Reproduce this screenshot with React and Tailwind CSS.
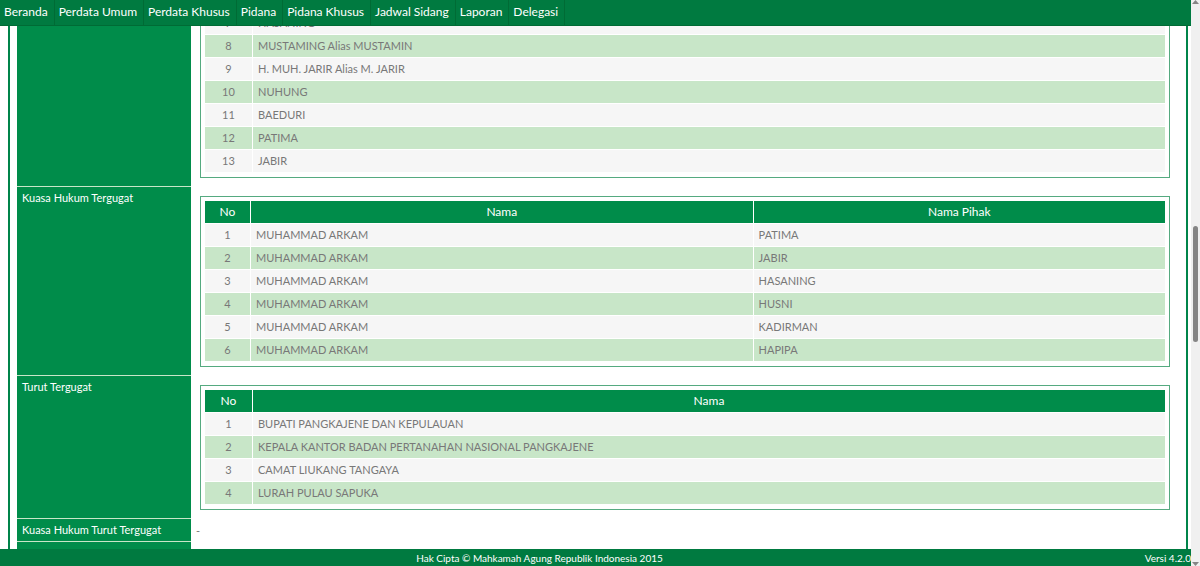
const menu = [
  'Beranda',
  'Perdata Umum',
  'Perdata Khusus',
  'Pidana',
  'Pidana Khusus',
  'Jadwal Sidang',
  'Laporan',
  'Delegasi',
]

const tergugat = [
  [7, 'HASANING'],
  [8, 'MUSTAMING Alias MUSTAMIN'],
  [9, 'H. MUH. JARIR Alias M. JARIR'],
  [10, 'NUHUNG'],
  [11, 'BAEDURI'],
  [12, 'PATIMA'],
  [13, 'JABIR'],
]

const kuasaTergugat = [
  [1, 'MUHAMMAD ARKAM', 'PATIMA'],
  [2, 'MUHAMMAD ARKAM', 'JABIR'],
  [3, 'MUHAMMAD ARKAM', 'HASANING'],
  [4, 'MUHAMMAD ARKAM', 'HUSNI'],
  [5, 'MUHAMMAD ARKAM', 'KADIRMAN'],
  [6, 'MUHAMMAD ARKAM', 'HAPIPA'],
]

const turutTergugat = [
  [1, 'BUPATI PANGKAJENE DAN KEPULAUAN'],
  [2, 'KEPALA KANTOR BADAN PERTANAHAN NASIONAL PANGKAJENE'],
  [3, 'CAMAT LIUKANG TANGAYA'],
  [4, 'LURAH PULAU SAPUKA'],
]

function PartyTable({ head, rows, widths }) {
  return (
    <div className="border border-[#55aa80] p-1">
      <table className="w-full table-fixed border-separate border-spacing-0 text-[#787878]">
        <colgroup>
          {widths.map((w, i) => (
            <col key={i} className={w} />
          ))}
        </colgroup>
        {head && (
          <thead>
            <tr>
              {head.map((title) => (
                <th
                  key={title}
                  scope="col"
                  className="h-[23px] border-r border-b border-white bg-[#008c4a] p-0 text-center text-[12px] font-normal text-white last:border-r-0"
                >
                  {title}
                </th>
              ))}
            </tr>
          </thead>
        )}
        <tbody>
          {rows.map((row) => (
            <tr key={row[0]} className="bg-[#f6f6f6] even:bg-[#c8e6c8]">
              {row.map((cell, i) => (
                <td
                  key={i}
                  className={
                    i === 0
                      ? 'h-[23px] border-r border-b border-white p-0 text-center'
                      : 'h-[23px] border-r border-b border-white py-0 pr-0 pl-[5px] last:border-r-0'
                  }
                >
                  {cell}
                </td>
              ))}
            </tr>
          ))}
        </tbody>
      </table>
    </div>
  )
}

function DetailRow({ label, children }) {
  return (
    <tr>
      <th
        scope="row"
        className="border-b border-[#c8e6c8] bg-[#008c4a] py-[3px] pr-1 pl-[5px] text-left align-top font-normal text-white"
      >
        {label}
      </th>
      {children}
    </tr>
  )
}

function Scrollbar() {
  return (
    <div className="flex w-[9px] shrink-0 flex-col items-center justify-between bg-[#f0f0f0]" aria-hidden="true">
      <svg className="h-1 w-[7px]" viewBox="0 0 7 4">
        <path d="M3.5 0L7 4H0z" fill="#858585" />
      </svg>
      <div className="flex w-full flex-1 flex-col items-center">
        <div className="grow-[222]" />
        <div className="w-[5px] grow-[116] rounded-full bg-[#858585]" />
        <div className="grow-[220]" />
      </div>
      <svg className="h-1 w-[7px]" viewBox="0 0 7 4">
        <path d="M3.5 4L0 0h7z" fill="#858585" />
      </svg>
    </div>
  )
}

export default function App() {
  return (
    <div className="flex h-screen bg-white font-['Century_Gothic',Lato,sans-serif] text-[11px] leading-4">
      <div className="flex min-w-0 flex-1 flex-col">
        <nav className="flex h-[26px] shrink-0 border-b border-[#006b35] bg-[#007a40] text-[12px]">
          {menu.map((item) => (
            <a key={item} href="#" className="border-r border-[#006b35] pt-1 pr-[6px] pl-1 text-white">
              {item}
            </a>
          ))}
        </nav>

        <main className="ml-2 mr-[3px] min-h-0 flex-1 overflow-hidden border-x-2 border-[#00844a] pl-[7px] pr-4">
          {/* scrolled part way down the list of defendants */}
          <table className="-mt-7 w-full table-fixed border-separate border-spacing-0">
            <colgroup>
              <col className="w-[174px]" />
              <col />
            </colgroup>
            <tbody>
              <DetailRow>
                <td className="py-[9px] pl-[9px] pr-0">
                  <PartyTable rows={tergugat} widths={['w-12', '']} />
                </td>
              </DetailRow>
              <DetailRow label="Kuasa Hukum Tergugat">
                <td className="py-[9px] pl-[9px] pr-0">
                  <PartyTable
                    head={['No', 'Nama', 'Nama Pihak']}
                    rows={kuasaTergugat}
                    widths={['w-[46px]', '', 'w-3/7']}
                  />
                </td>
              </DetailRow>
              <DetailRow label="Turut Tergugat">
                <td className="py-[9px] pl-[9px] pr-0">
                  <PartyTable head={['No', 'Nama']} rows={turutTergugat} widths={['w-12', '']} />
                </td>
              </DetailRow>
              <DetailRow label="Kuasa Hukum Turut Tergugat">
                <td className="py-[3px] pl-[5px] pr-0 text-[#787878]">-</td>
              </DetailRow>
              <DetailRow>
                <td className="h-6" />
              </DetailRow>
            </tbody>
          </table>
        </main>

        <footer className="flex h-[17px] shrink-0 bg-[#007a40] text-[10px] leading-[18px] text-white">
          <span className="flex-1 text-center">Hak Cipta © Mahkamah Agung Republik Indonesia 2015</span>
          <span className="w-28 text-right">Versi 4.2.0</span>
        </footer>
      </div>
      <Scrollbar />
    </div>
  )
}
